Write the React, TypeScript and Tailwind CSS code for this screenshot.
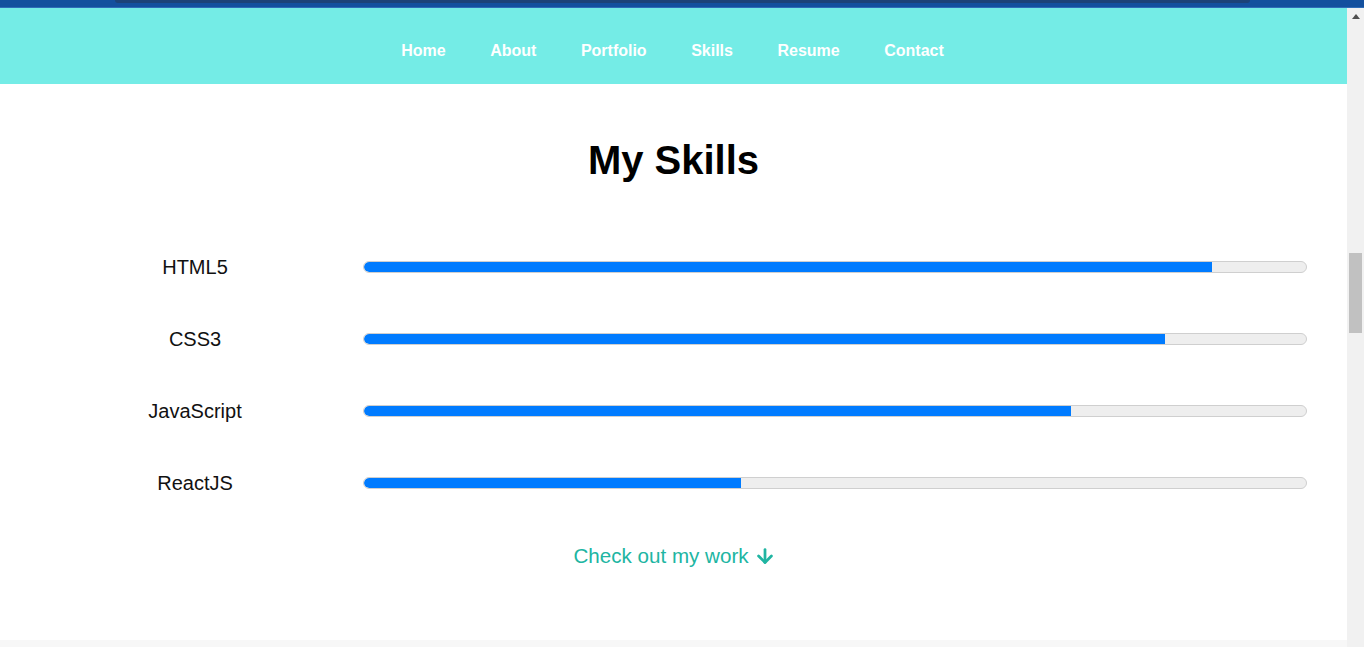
import React from "react";
import { ArrowDown } from "lucide-react";

const skills = [
  { name: "HTML5", pct: 90 },
  { name: "CSS3", pct: 85 },
  { name: "JavaScript", pct: 75 },
  { name: "ReactJS", pct: 40 },
];

const links = ["Home", "About", "Portfolio", "Skills", "Resume", "Contact"];

export default function App() {
  return (
    <div className="w-[1364px] h-[647px] overflow-hidden flex flex-col bg-white" style={{ fontFamily: '"Liberation Sans", Arial, sans-serif' }}>
      {/* top strip from previous section */}
      <div className="h-[8px] bg-[#13509e] flex flex-col shrink-0">
        <div className="h-[3px] mx-[115px] mr-[114px] bg-[#1c4378] rounded-b-[6px]" />
        <div className="flex-1" />
        <div className="h-[1px] bg-[#2f6cb8]" />
      </div>
      <div className="flex flex-1 min-h-0">
        <div className="flex-1 flex flex-col min-w-0">
          <nav className="h-[76px] bg-[#74ece6] flex items-center justify-center gap-[44.5px] pt-[10px] pr-[2px] shrink-0">
            {links.map((l) => (
              <span key={l} className="text-white font-bold text-[16px] leading-none">{l}</span>
            ))}
          </nav>
          <section className="flex-1 flex flex-col">
            <h2 className="text-center text-[40px] font-bold text-black leading-none mt-[56px]">My Skills</h2>
            <div className="flex flex-col gap-[50px] mt-[76px]">
              {skills.map((s) => (
                <div key={s.name} className="flex items-center h-[22px]">
                  <div className="w-[390px] text-center text-[20px] text-[#111] leading-none">{s.name}</div>
                  <div className="ml-[-27px] mr-[40px] flex-1 h-[12px] rounded-full bg-[#eeeeee] border border-[#cfcfcf] overflow-hidden">
                    <div className="h-full bg-[#007bff] rounded-l-full" style={{ width: `${s.pct}%` }} />
                  </div>
                </div>
              ))}
            </div>
            <div className="mt-[51px] flex items-center justify-center gap-[5px] pl-[2px] text-[#20b5a2] text-[20.6px] leading-none">
              <span>Check out my work</span>
              <ArrowDown size={22} strokeWidth={3} />
            </div>
          </section>
          <div className="h-[7px] bg-[#f7f7f7] shrink-0" />
        </div>
        {/* fake scrollbar */}
        <div className="w-[17px] bg-[#f1f1f1] flex flex-col items-center shrink-0">
          <div className="h-[17px] flex items-center justify-center">
            <div className="w-0 h-0 border-l-[4px] border-r-[4px] border-b-[5px] border-l-transparent border-r-transparent border-b-[#505050]" />
          </div>
          <div className="mt-[228px] w-[13px] h-[80px] bg-[#c1c1c1]" />
        </div>
      </div>
    </div>
  );
}
